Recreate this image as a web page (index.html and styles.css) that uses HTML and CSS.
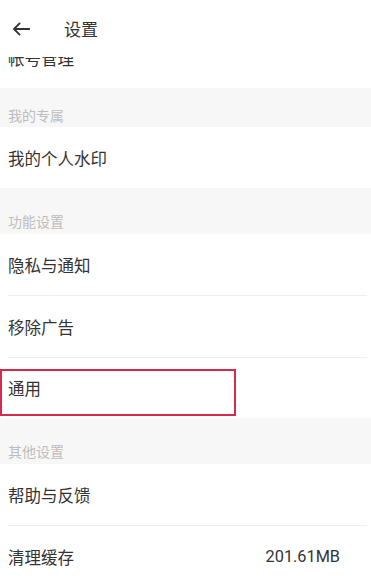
FILE: index.html
```html
<!DOCTYPE html>
<html lang="zh-CN">
<head>
<meta charset="utf-8">
<title>设置</title>
<link rel="stylesheet" href="styles.css">
</head>
<body>
<div class="screen">
  <header class="topbar">
    <svg class="back" width="18" height="14" viewBox="0 0 18 14" aria-hidden="true">
      <path d="M17.5 7H2M7.6 1.4L2 7l5.6 5.6" fill="none" stroke="#333" stroke-width="1.8" stroke-linecap="round" stroke-linejoin="round"/>
    </svg>
    <h1 class="title">设置</h1>
  </header>
  <main class="list">
    <div class="row row-first"><span class="label">帐号管理</span></div>
    <div class="section section-short"><span>我的专属</span></div>
    <div class="row row-last"><span class="label">我的个人水印</span></div>
    <div class="section"><span>功能设置</span></div>
    <div class="row"><span class="label">隐私与通知</span></div>
    <div class="row"><span class="label">移除广告</span></div>
    <div class="row row-last row-marked"><span class="label">通用</span><span class="mark"></span></div>
    <div class="section"><span>其他设置</span></div>
    <div class="row"><span class="label">帮助与反馈</span></div>
    <div class="row"><span class="label">清理缓存</span><span class="value">201.61MB</span></div>
  </main>
</div>
</body>
</html>
```
FILE: styles.css
```css
html, body {
  margin: 0;
  padding: 0;
  background: #fff;
}
body {
  font-family: "Noto Sans CJK SC", "Noto Sans", sans-serif;
  color: #333;
}
.screen {
  width: 371px;
  height: 587px;
  overflow: hidden;
  display: flex;
  flex-direction: column;
}
.topbar {
  height: 57px;
  flex: none;
  display: flex;
  align-items: center;
  padding-left: 12px;
  background: #fff;
  position: relative;
  z-index: 2;
}
.back {
  display: block;
  margin-top: 1px;
}
.title {
  margin: 0 0 0 34px;
  font-size: 17px;
  font-weight: 400;
  line-height: 20px;
  color: #333;
}
.list {
  flex: 1;
  overflow: hidden;
  display: flex;
  flex-direction: column;
}
.row {
  flex: none;
  height: 61px;
  margin: 0 4px 0 8px;
  border-bottom: 1px solid #efefef;
  display: flex;
  align-items: center;
  justify-content: space-between;
  position: relative;
  font-size: 16.5px;
}
.row-first {
  margin-top: -30px;
  border-bottom: none;
}
.row-last {
  border-bottom: none;
}
.row-marked {
  height: 60px;
}
.label {
  line-height: 20px;
  color: #333;
}
.value {
  font-family: Roboto, "Noto Sans", sans-serif;
  font-size: 16.3px;
  color: #333;
  padding-right: 27px;
}
.section {
  flex: none;
  height: 46px;
  background: #f7f7f7;
  padding: 0 8px 6px;
  box-sizing: border-box;
  display: flex;
  align-items: flex-end;
  font-size: 14px;
  line-height: 14px;
  color: #bdbdbd;
}
.section-short {
  height: 39px;
  padding-bottom: 5px;
}
.mark {
  position: absolute;
  left: -8px;
  top: 11px;
  width: 236px;
  height: 47px;
  box-sizing: border-box;
  border: 2px solid #d8284c;
}
```
